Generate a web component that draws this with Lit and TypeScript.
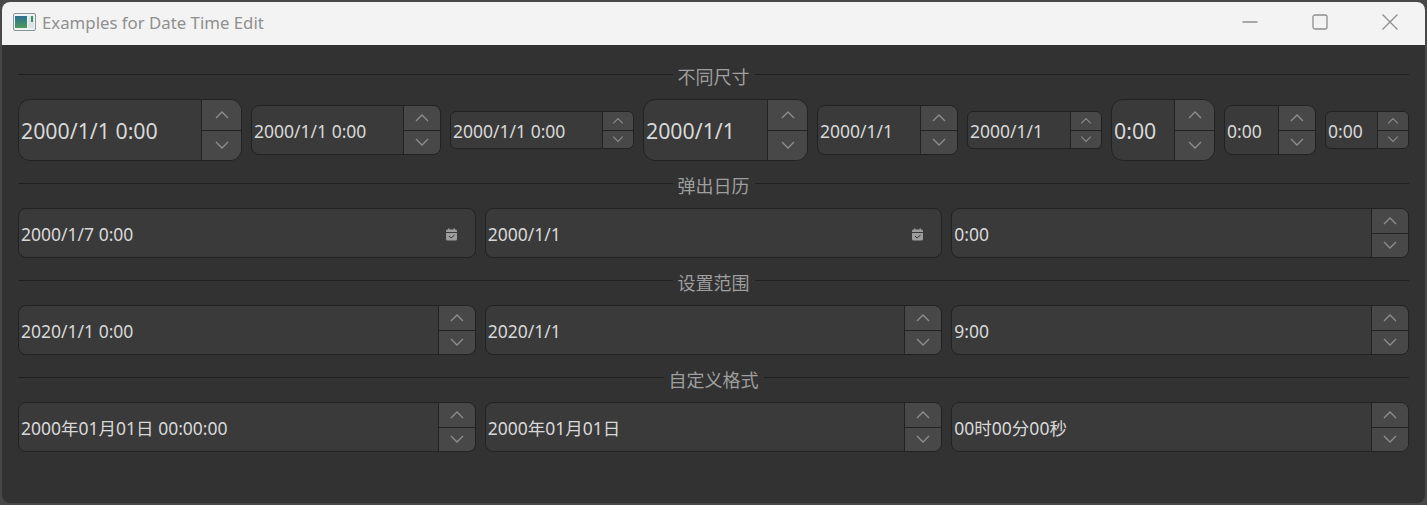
import { LitElement, css, html } from 'lit';
import { customElement, property } from 'lit/decorators.js';

const FONT = css`'Noto Sans', 'Noto Sans CJK SC', sans-serif`;

@customElement('date-edit')
export class DateEdit extends LitElement {
  @property({ type: String }) value = '';
  @property({ type: String }) size: 'sm' | 'md' | 'lg' = 'md';
  @property({ type: Boolean }) calendar = false;

  static styles = css`
    :host {
      display: block;
      min-width: 0;
    }
    .box {
      display: flex;
      align-items: stretch;
      height: 50px;
      box-sizing: border-box;
      border: 1px solid #222222;
      border-radius: 8px;
      background: #3a3a3a;
      overflow: hidden;
      font-family: ${FONT};
      font-size: 17.5px;
      line-height: 24px;
      color: #d8d8d8;
    }
    .box.lg {
      height: 62px;
      border-radius: 12px;
      font-size: 21.3px;
      line-height: 30px;
    }
    .box.sm {
      height: 38px;
      border-radius: 6px;
    }
    .text {
      flex: 1;
      min-width: 0;
      display: flex;
      align-items: center;
      padding: 2px 0 0 2px;
      white-space: nowrap;
    }
    .spin {
      box-sizing: border-box;
      width: 37px;
      display: flex;
      flex-direction: column;
      border-left: 1px solid #222222;
      background: #484848;
    }
    .lg .spin {
      width: 40px;
    }
    .sm .spin {
      width: 31px;
    }
    .spin div {
      flex: 1;
      display: flex;
      align-items: center;
      justify-content: center;
    }
    .spin div + div {
      border-top: 1px solid #222222;
    }
    .spin svg {
      width: 16px;
      height: 10px;
      fill: none;
      stroke: #8e8e8e;
      stroke-width: 1.3;
    }
    .sm .spin svg {
      width: 14px;
      height: 8px;
    }
    .cal {
      display: flex;
      align-items: center;
      padding: 2px 17px 0 0;
    }
    .cal svg {
      width: 13px;
      height: 13px;
    }
  `;

  render() {
    return html`
      <div class="box ${this.size}">
        <div class="text">${this.value}</div>
        ${this.calendar
          ? html`<div class="cal">
              <svg viewBox="0 0 13 13">
                <path fill="#9c9c9c" d="M1 3a1.5 1.5 0 0 1 1.5-1.5H3V0.5h1.5v1h4v-1H10v1h.5A1.5 1.5 0 0 1 12 3v8a1.5 1.5 0 0 1-1.5 1.5h-8A1.5 1.5 0 0 1 1 11z" />
                <path fill="none" stroke="#3a3a3a" stroke-width="1" d="M1 4.5h11M4 8l2 2 3.5-3" />
              </svg>
            </div>`
          : html`<div class="spin">
              <div><svg viewBox="0 0 16 10"><path d="M2 8l6-6 6 6" /></svg></div>
              <div><svg viewBox="0 0 16 10"><path d="M2 2l6 6 6-6" /></svg></div>
            </div>`}
      </div>
    `;
  }
}

@customElement('app-root')
export class AppRoot extends LitElement {
  static styles = css`
    :host {
      display: block;
      height: 505px;
      overflow: hidden;
      background: #484848;
      font-family: ${FONT};
    }
    .window {
      margin: 2px 2px 0;
      height: 501px;
      border-radius: 8px;
      overflow: hidden;
      background: #323232;
    }
    .titlebar {
      height: 43px;
      box-sizing: border-box;
      padding: 0 0 3px 11px;
      display: flex;
      align-items: center;
      background: #f3f3f3;
      color: #8f8f8f;
      font-size: 16.8px;
    }
    .titlebar .app-icon {
      width: 23px;
      height: 18px;
      margin-right: 6px;
    }
    .title {
      flex: 1;
    }
    .controls {
      display: flex;
    }
    .controls div {
      width: 70px;
      display: flex;
      justify-content: center;
    }
    .controls svg {
      width: 16px;
      height: 16px;
      fill: none;
      stroke: #8e8e8e;
      stroke-width: 1.3;
    }
    .content {
      padding: 19px 16px 0;
    }
    .head {
      display: flex;
      align-items: center;
      gap: 5px;
      height: 20px;
      color: #9e9e9e;
      font-size: 18px;
      line-height: 20px;
    }
    .head span {
      padding-top: 5px;
    }
    .head::before,
    .head::after {
      content: '';
      flex: 1;
      height: 1px;
      background: #1f1f1f;
    }
    .row {
      margin: 15px 0 12px;
      display: flex;
      align-items: center;
      gap: 9px;
    }
    .grid {
      margin: 15px 0 12px;
      display: grid;
      grid-template-columns: repeat(3, 1fr);
      gap: 9px;
    }
  `;

  private grid(items: { value: string; calendar?: boolean }[]) {
    return html`<div class="grid">
      ${items.map(
        (i) => html`<date-edit .value=${i.value} ?calendar=${!!i.calendar}></date-edit>`
      )}
    </div>`;
  }

  render() {
    const sizes: [string, 'sm' | 'md' | 'lg', number][] = [
      ['2000/1/1 0:00', 'lg', 224],
      ['2000/1/1 0:00', 'md', 190],
      ['2000/1/1 0:00', 'sm', 184],
      ['2000/1/1', 'lg', 165],
      ['2000/1/1', 'md', 141],
      ['2000/1/1', 'sm', 135],
      ['0:00', 'lg', 104],
      ['0:00', 'md', 92],
      ['0:00', 'sm', 84],
    ];
    return html`
      <div class="window">
        <div class="titlebar">
          <svg class="app-icon" viewBox="0 0 23 18">
            <defs>
              <linearGradient id="g" x1="0" y1="0" x2="0" y2="1">
                <stop offset="0" stop-color="#2c6f93" />
                <stop offset="1" stop-color="#4f9a5c" />
              </linearGradient>
            </defs>
            <rect x="0.5" y="0.5" width="22" height="17" rx="1.5" fill="#eef2f2" stroke="#8b9499" />
            <rect x="2" y="3" width="12" height="12" fill="url(#g)" />
            <rect x="15" y="3" width="6" height="12" fill="#dde5e2" />
            <rect x="18" y="3" width="2" height="6" fill="#3f8f62" />
          </svg>
          <span class="title">Examples for Date Time Edit</span>
          <div class="controls">
            <div><svg viewBox="0 0 16 16"><path d="M0.5 8h15" /></svg></div>
            <div><svg viewBox="0 0 16 16"><rect x="1" y="1" width="14" height="14" rx="2" /></svg></div>
            <div><svg viewBox="0 0 16 16"><path d="M0.5 0.5l15 15M15.5 0.5l-15 15" /></svg></div>
          </div>
        </div>
        <div class="content">
          <div class="head"><span>不同尺寸</span></div>
          <div class="row">
            ${sizes.map(
              ([value, size, width]) =>
                html`<date-edit .value=${value} .size=${size} style="width:${width}px"></date-edit>`
            )}
          </div>
          <div class="head"><span>弹出日历</span></div>
          ${this.grid([{ value: '2000/1/7 0:00', calendar: true }, { value: '2000/1/1', calendar: true }, { value: '0:00' }])}
          <div class="head"><span>设置范围</span></div>
          ${this.grid([{ value: '2020/1/1 0:00' }, { value: '2020/1/1' }, { value: '9:00' }])}
          <div class="head"><span>自定义格式</span></div>
          ${this.grid([{ value: '2000年01月01日 00:00:00' }, { value: '2000年01月01日' }, { value: '00时00分00秒' }])}
        </div>
      </div>
    `;
  }
}
